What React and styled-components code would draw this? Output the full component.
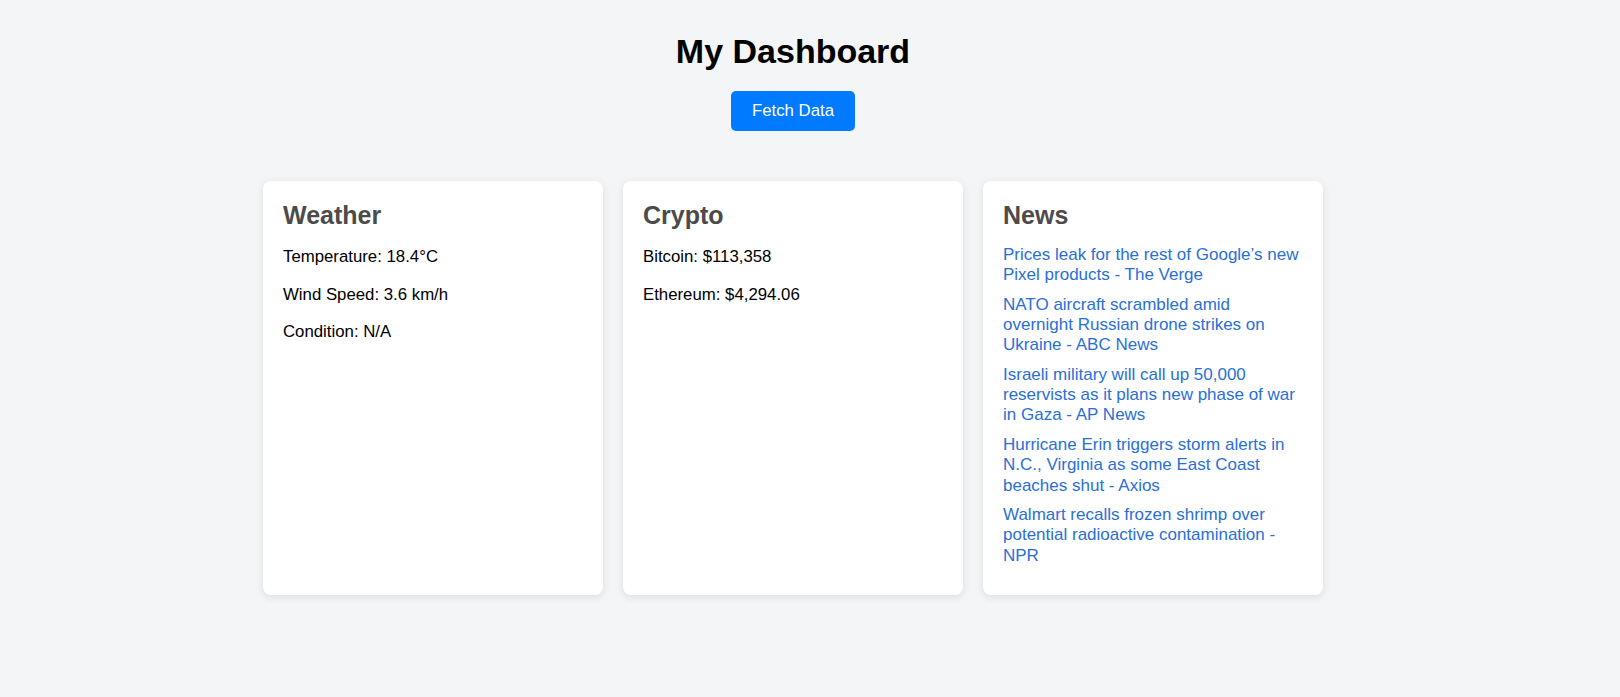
import React from "react";
import styled, { createGlobalStyle } from "styled-components";

const GlobalStyle = createGlobalStyle`
  body {
    margin: 0;
    background: #f4f5f7;
    font-family: "Liberation Sans", Arial, sans-serif;
    font-size: 16.8px;
    color: #000;
  }
`;

const Page = styled.div`
  padding: 32px 34px 40px 0;
  display: flex;
  flex-direction: column;
  align-items: center;
`;

const Title = styled.h1`
  margin: 0;
  font-size: 34px;
  line-height: 39px;
  font-weight: bold;
`;

const Button = styled.button`
  margin-top: 20px;
  background: #007bff;
  color: #fff;
  border: none;
  border-radius: 5px;
  padding: 10px 21px;
  font-family: inherit;
  font-size: 16.8px;
  line-height: 20px;
  cursor: pointer;
`;

const Grid = styled.div`
  margin-top: 50px;
  display: grid;
  grid-template-columns: repeat(3, 340px);
  gap: 20px;
  align-items: stretch;
`;

const Card = styled.div`
  background: #fff;
  border-radius: 8px;
  box-shadow: 0 2px 8px rgba(0, 0, 0, 0.1);
  padding: 20px 20px 20px;
`;

const CardTitle = styled.h2`
  margin: 0;
  font-size: 25px;
  line-height: 29px;
  color: #4d4b4a;
`;

const Line = styled.p`
  margin: 17.4px 0;
  line-height: 20px;
`;

const NewsList = styled.ul`
  list-style: none;
  padding: 0;
  margin: 15px 0 0;
`;

const NewsItem = styled.li`
  margin-bottom: 9.5px;
  font-size: 17px;
  line-height: 20.2px;
  a {
    color: #2a6fd8;
    text-decoration: none;
  }
`;

const news = [
  "Prices leak for the rest of Google\u2019s new Pixel products - The Verge",
  "NATO aircraft scrambled amid overnight Russian drone strikes on Ukraine - ABC News",
  "Israeli military will call up 50,000 reservists as it plans new phase of war in Gaza - AP News",
  "Hurricane Erin triggers storm alerts in N.C., Virginia as some East Coast beaches shut - Axios",
  "Walmart recalls frozen shrimp over potential radioactive contamination - NPR",
];

const App = () => {
  return (
    <>
      <GlobalStyle />
      <Page>
        <Title>My Dashboard</Title>
        <Button>Fetch Data</Button>
        <Grid>
          <Card>
            <CardTitle>Weather</CardTitle>
            <Line>Temperature: 18.4°C</Line>
            <Line>Wind Speed: 3.6 km/h</Line>
            <Line>Condition: N/A</Line>
          </Card>
          <Card>
            <CardTitle>Crypto</CardTitle>
            <Line>Bitcoin: $113,358</Line>
            <Line>Ethereum: $4,294.06</Line>
          </Card>
          <Card>
            <CardTitle>News</CardTitle>
            <NewsList>
              {news.map(n => (
                <NewsItem key={n}>
                  <a href="#">{n}</a>
                </NewsItem>
              ))}
            </NewsList>
          </Card>
        </Grid>
      </Page>
    </>
  );
};

export default App;
